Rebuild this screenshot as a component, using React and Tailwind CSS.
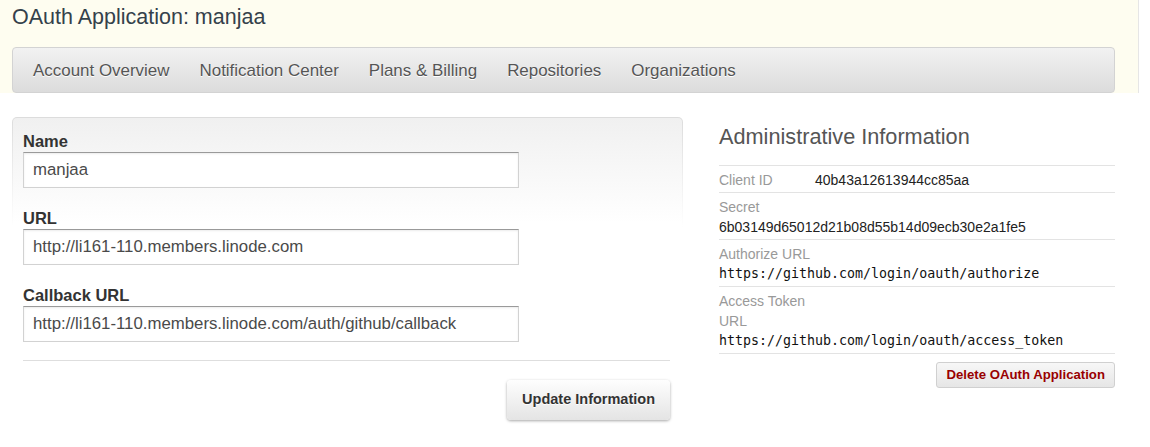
import React from "react";

const navItems = ["Account Overview", "Notification Center", "Plans & Billing", "Repositories", "Organizations"];

const fields = [
	{ label: "Name", value: "manjaa" },
	{ label: "URL", value: "http://li161-110.members.linode.com" },
	{ label: "Callback URL", value: "http://li161-110.members.linode.com/auth/github/callback" },
];

const Field = ({ label, value, first }) => (
	<div className={first ? "" : "mt-[19px]"}>
		<label className="block text-[16.5px] leading-[22px] font-bold text-[#333]">{label}</label>
		<input
			readOnly
			value={value}
			className="block h-[36px] w-[496px] border border-[#d2d2d2] border-t-[#9a9a9a] bg-white px-[9px] text-[16.8px] text-[#4a4a4a] shadow-[inset_0_1px_2px_rgba(0,0,0,0.08)] outline-none"
			style={{ fontFamily: "inherit" }}
		/>
	</div>
);

const InfoRow = ({ label, children, inline }) => (
	<div className={"border-b border-[#e3e3e3] pt-[4px] pb-[2px] leading-[20px] " + (inline ? "flex" : "")}>
		<div className="w-[96px] text-[14px] text-[#999]">{label}</div>
		{children}
	</div>
);

export default function App() {
	return (
		<div className="min-h-[447px] bg-white" style={{ fontFamily: '"Liberation Sans", Arial, sans-serif' }}>
			<div className="w-[1139px] border-r border-[#e6e6e6] bg-[#fefdf0]">
				<h1 className="pl-[12px] pt-[3px] text-[21.5px] leading-[28px] font-normal text-[#34414b]">
					OAuth Application: manjaa
				</h1>
				<div className="mt-[16px] ml-[12px] flex h-[46px] w-[1103px] items-center rounded-[4px] border border-[#d3d3d3] bg-[linear-gradient(to_bottom,#f2f2f2,#dcdcdc)] pl-[5px] pt-[2px]">
					{navItems.map((item) => (
						<a key={item} className="px-[15px] text-[16.95px] text-[#555] [text-shadow:0_1px_0_#fff]">
							{item}
						</a>
					))}
				</div>
			</div>

			<div className="mt-[24px] flex gap-[36px] pl-[12px]">
				<div className="w-[671px] rounded-t-[5px] bg-[linear-gradient(to_bottom,#dcdcdc,#fff_110px)] px-px pt-px">
					<div className="rounded-t-[4px] bg-[linear-gradient(to_bottom,#f0f0f0,#fff_105px)] pt-[12px] pl-[10px] pr-[12px]">
						{fields.map((f, i) => (
							<Field key={f.label} label={f.label} value={f.value} first={i === 0} />
						))}
						<div className="mt-[18px] border-t border-[#dedede]" />
						<div className="mt-[19px] flex justify-end">
							<button className="h-[40px] rounded-[4px] bg-[linear-gradient(to_bottom,#fefefe,#e4e4e4)] px-[15px] text-[14.5px] font-bold text-[#333] shadow-[0_1px_3px_rgba(0,0,0,0.35)] [text-shadow:0_1px_0_#fff]">
								Update Information
							</button>
						</div>
					</div>
				</div>

				<div className="w-[396px] pt-[6px]">
					<h2 className="text-[21.7px] leading-[28px] font-normal text-[#555]">Administrative Information</h2>
					<div className="mt-[14px] border-t border-[#e3e3e3]">
						<InfoRow label="Client ID" inline>
							<div className="text-[14px] text-[#222]">40b43a12613944cc85aa</div>
						</InfoRow>
						<InfoRow label="Secret">
							<div className="text-[14px] text-[#222]">6b03149d65012d21b08d55b14d09ecb30e2a1fe5</div>
						</InfoRow>
						<InfoRow label="Authorize URL">
							<div className="text-[13.3px] text-[#111]" style={{ fontFamily: '"DejaVu Sans Mono", monospace' }}>
								https://github.com/login/oauth/authorize
							</div>
						</InfoRow>
						<InfoRow label="Access Token URL">
							<div className="text-[13.3px] text-[#111]" style={{ fontFamily: '"DejaVu Sans Mono", monospace' }}>
								https://github.com/login/oauth/access_token
							</div>
						</InfoRow>
					</div>
					<div className="mt-[8px] flex justify-end">
						<button className="h-[26px] rounded-[3px] border border-[#d0d0d0] bg-[linear-gradient(to_bottom,#f7f7f7,#e6e6e6)] px-[9px] text-[13.2px] font-bold text-[#990000]">
							Delete OAuth Application
						</button>
					</div>
				</div>
			</div>
		</div>
	);
}
